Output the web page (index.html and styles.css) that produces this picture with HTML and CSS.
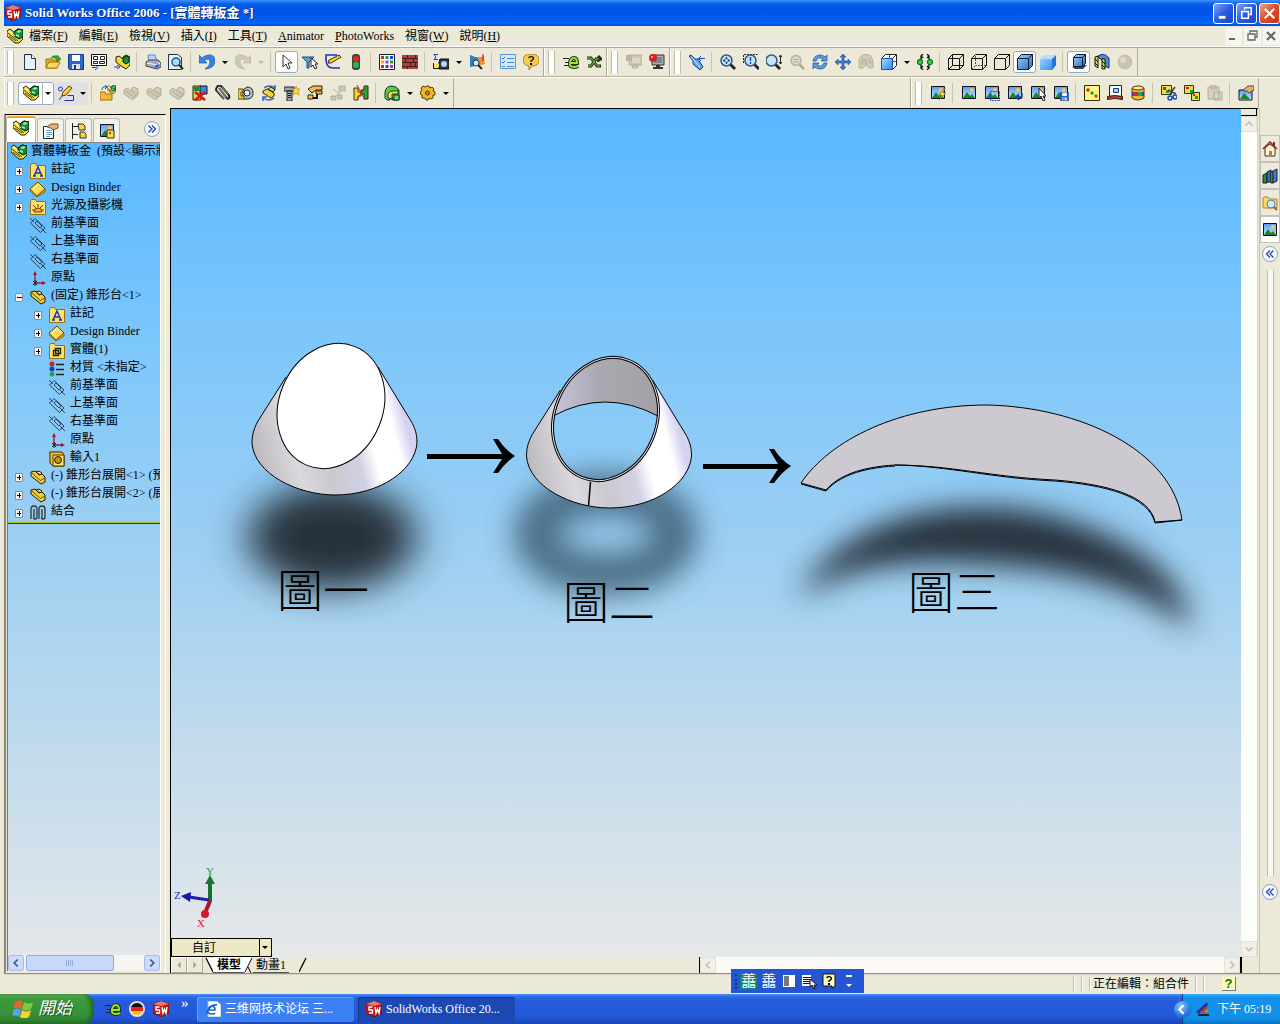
FILE: index.html
```html
<!DOCTYPE html>
<html lang="zh-Hant">
<head>
<meta charset="utf-8">
<title>SolidWorks Office 2006 - [實體轉板金 *]</title>
<link rel="stylesheet" href="styles.css">
</head>
<body>
<svg class="sprite" aria-hidden="true">
  <defs>
    <linearGradient id="g-blue" x1="0" y1="0" x2="1" y2="1"><stop offset="0" stop-color="#9cd4ff"/><stop offset="1" stop-color="#2868b8"/></linearGradient>
    <linearGradient id="g-sky" x1="0" y1="0" x2="1" y2="1"><stop offset="0" stop-color="#a8dcff"/><stop offset="1" stop-color="#2c84ee"/></linearGradient>
    <linearGradient id="g-pic" x1="0" y1="0" x2="0" y2="1"><stop offset="0" stop-color="#5a9cf0"/><stop offset="1" stop-color="#c8e4ff"/></linearGradient>
  </defs>
  <symbol id="asm" viewBox="0 0 16 16"><path d="M0 3l3-2 5 4V3l3-2 5 1v9l-4 4H8L0 8z" fill="#f4e048" stroke="#221c00"/><path d="M7 4l4-3 5 1v7l-4 2-5-3z" fill="#18883c" stroke="#06240c"/><path d="M9 4l3-2 3 1-3 2zM9 6l3 1v2L9 8z" fill="#90f0a0"/><path d="M1 5l10 8M2 8l7 5" stroke="#5a4800"/><path d="M2 3l6 5" stroke="#fffcb8"/></symbol>
  <symbol id="asmy" viewBox="0 0 16 16"><path d="M1 3l4-1 4 4 3-1 3 3v5l-4 2L1 7z" fill="#f0d040" stroke="#221c00"/><path d="M2 4l9 8M11 11l4-2" stroke="#6a5000"/><path d="M6 3l3-1 3 2-2 2z" fill="#ffe860" stroke="#221c00"/></symbol>
  <symbol id="asmg" viewBox="0 0 16 16"><path d="M1 5l3-2 4 3V4l3-2 4 2v6l-4 4H8L1 9z" fill="#d2ccb4" stroke="#b5ae94"/><path d="M3 6l8 6 3-4M8 6l4 2" stroke="#aca58c" fill="none"/></symbol>
  <symbol id="new" viewBox="0 0 16 16"><path d="M2.500.5h7l4 4v11h-11z" fill="#e4f0fc" stroke="#26324a"/><path d="M9.500.5v4h4" fill="#fff" stroke="#26324a"/></symbol>
  <symbol id="open" viewBox="0 0 16 16"><path d="M1 5h5l1 1h5v8H1z" fill="#e8a820" stroke="#a87000"/><path d="M1 14l3-6h11l-3 6z" fill="#ffdc60" stroke="#a87000"/><path d="M6 4q3-4 6-1V1l4 4-4 3V5Q9 3 6 4" fill="#28b428" stroke="#0a6a0a" stroke-width=".6"/></symbol>
  <symbol id="save" viewBox="0 0 16 16"><path d="M.5.5h15v15h-14l-1-1z" fill="#2e66c8" stroke="#123a86"/><path d="M4 1h8v6H4z" fill="#fff"/><path d="M4 10h8v5H4z" fill="#d8e4f4"/><path d="M6 11h2v4H6z" fill="#123a86"/></symbol>
  <symbol id="dwg" viewBox="0 0 16 16"><path d="M.5.500h15v11H.5z" fill="#fff" stroke="#111"/><path d="M2.500 2.500h4v3h-4zM2.500 7.500h4v2h-4zM9.500 2.500h4v3h-4zM8.500 7.500h5v2h-5z" fill="none" stroke="#222"/><path d="M1 13.500h4M4 11l3 2.500L4 16" fill="none" stroke="#1848c8"/></symbol>
  <symbol id="mkasm" viewBox="0 0 16 16"><path d="M2 3l3-1 4 3V3l3-2 4 2v8l-4 4-5-3-5-4z" fill="#f0d840" stroke="#221c00"/><path d="M9 4l3-2 3 1v5l-3 2-3-2z" fill="#18883c" stroke="#06240c"/><path d="M0 13h4M3 11l3 2-3 2" fill="none" stroke="#1848c8"/></symbol>
  <symbol id="print" viewBox="0 0 16 16"><path d="M3 1h7l2 7H4z" fill="#b4d4ff" stroke="#6888b0"/><path d="M1 8l3-2h9l3 3v4l-4 2-11-3z" fill="#a8acb8" stroke="#3c4250"/><path d="M2 9l10 2 3-2" stroke="#f0f4ff" fill="none"/><path d="M10 13l4-2" stroke="#2460c8" stroke-width="2"/></symbol>
  <symbol id="preview" viewBox="0 0 16 16"><path d="M.5.500h9l4 3v12H.5z" fill="#e4f0fc" stroke="#26324a"/><circle cx="8" cy="8" r="4" fill="#a8dcf8" stroke="#24507c" stroke-width="1.500"/><path d="M11 11l4 4" stroke="#222" stroke-width="2"/></symbol>
  <symbol id="undo" viewBox="0 0 16 16"><path d="M0 1v8h8L5.500 6.500Q11 3 11 8q0 4-5 7 10-1 10-8 0-7-7-6-4 1-6 3z" fill="#3484e0" stroke="#1c549c" stroke-width=".7"/></symbol>
  <symbol id="redo" viewBox="0 0 16 16"><path d="M16 1v8H8l2.500-2.500Q5 3 5 8q0 4 5 7-10-1-10-8 0-7 7-6 4 1 6 3z" fill="#cfc9b4" stroke="#bcb59c" stroke-width=".7"/></symbol>
  <symbol id="cursor" viewBox="0 0 16 16"><path d="M4 1v12l3-3 2 5 2-1-2-5h4z" fill="#fff" stroke="#333"/></symbol>
  <symbol id="filter" viewBox="0 0 16 16"><path d="M0 3h12L7 8v6H5V8z" fill="#58a0dc" stroke="#1c4874"/><path d="M9 4v9l2-2 2 4 2-1-2-4h3z" fill="#fff" stroke="#222"/></symbol>
  <symbol id="sketch" viewBox="0 0 16 16"><path d="M12 1H1v4q0 9 7 9h7" fill="none" stroke="#2030c0" stroke-width="1.600"/><path d="M3 9l1-3 10-5 2 2-10 6z" fill="#f8c848" stroke="#442a00"/></symbol>
  <symbol id="traffic" viewBox="0 0 16 16"><rect x="4" y="0" width="8" height="16" rx="3" fill="#444"/><circle cx="8" cy="5" r="3" fill="#e02818"/><circle cx="8" cy="11" r="3" fill="#20b848"/></symbol>
  <symbol id="palette" viewBox="0 0 16 16"><path d="M.5.500h15v15H.5z" fill="#fff" stroke="#123"/><path d="M2 2h3v3H2zM2 11h3v3H2z" fill="#d82020"/><path d="M6.500 2h3v3h-3zM11 6.500h3v3h-3z" fill="#18a040"/><path d="M11 2h3v3h-3zM6.500 11h3v3h-3z" fill="#2040d8"/><path d="M2 6.500h3v3H2z" fill="#f0b000"/><path d="M6.500 6.500h3v3h-3zM11 11h3v3h-3z" fill="#c030c0"/></symbol>
  <symbol id="brick" viewBox="0 0 16 16"><path d="M0 1h16v14H0z" fill="#a84436"/><path d="M0 4.500h16M0 8.500h16M0 12.500h16M5.500 1v3M11.500 4v4M3.500 4v4M8.500 8v4M13.500 8v4M5.500 12v3M13.500 1v3" stroke="#4a1a14"/></symbol>
  <symbol id="measure" viewBox="0 0 16 16"><path d="M5 .5H1L3 3 1 5.500h4" fill="none" stroke="#2038c0"/><path d="M7 5h9v10H6V8z" fill="#283848" stroke="#111"/><circle cx="11" cy="10" r="3" fill="#b8d8f0"/><path d="M.5 9v5.500H6" fill="none" stroke="#111"/><path d="M1 10h5v3H1z" fill="#f8e060"/></symbol>
  <symbol id="section" viewBox="0 0 16 16"><path d="M1 1q8 4 14 1v8L1 13z" fill="#50b860"/><path d="M1 1q6 3 8 3l1 7-9 2z" fill="#3878c8"/><path d="M9 4q4 0 5-2l2 8-5 1z" fill="#f09030"/><circle cx="7" cy="9" r="3" fill="#d0ecff" stroke="#234"/><path d="M9 11l4 4" stroke="#222" stroke-width="2"/><path d="M14 0v7" stroke="#d00"/></symbol>
  <symbol id="list" viewBox="0 0 16 16"><path d="M.5.500h15v14H.5z" fill="#d6e8fc" stroke="#5c94d8"/><path d="M2 4l1 1 2-2M2 8l1 1 2-2" stroke="#2468c0" fill="none"/><path d="M7 4.500h7M7 8.500h7M7 12.500h7M2 12.500h3" stroke="#4888d0"/></symbol>
  <symbol id="help" viewBox="0 0 16 16"><path d="M8 0q8 0 8 6t-7 6l-3 4v-4Q0 11 0 6q0-6 8-6z" fill="#f8cc50" stroke="#986800" stroke-width=".8"/><path d="M5.500 4q3-3 5 0 0 2-2.500 3v1" stroke="#222" stroke-width="1.500" fill="none"/><path d="M7 9h2v2H7z"/></symbol>
  <symbol id="eicon" viewBox="0 0 16 16"><path d="M0 4.500h6M2 8.500h4M1 11.500h5" stroke="#222"/><path d="M7 9h7q0-5-3-5T7 8.500 11 13q2 0 4-1" fill="none" stroke="#1c3410" stroke-width="4"/><path d="M7 9h7q0-5-3-5T7 8.500 11 13q2 0 4-1" fill="none" stroke="#a0e030" stroke-width="2"/></symbol>
  <symbol id="link" viewBox="0 0 16 16"><path d="M1 4h4l6 8h4M2 12h3l5-7h4M12 2l3 3-4 2" fill="none" stroke="#1c3010" stroke-width="2.800"/><path d="M1 4h4l6 8h3M2 12h3l5-7h3" fill="none" stroke="#88c860"/></symbol>
  <symbol id="pcg" viewBox="0 0 16 16"><path d="M3 1h13v10H3zM7 11h5v3H6z" fill="#cdc7b0" stroke="#b8b198"/><path d="M0 1h6v6H0z" fill="#bcb59c"/><path d="M6 4h8v5H6z" fill="#ddd8c4"/></symbol>
  <symbol id="pcr" viewBox="0 0 16 16"><path d="M3 1h12v10H3z" fill="#a8acb4" stroke="#333"/><path d="M5 3h8v6H5z" fill="#80868f"/><path d="M7 11h4v2h3v2H4v-2h3z" fill="#333"/><circle cx="4" cy="4" r="4" fill="#d82020"/><circle cx="3" cy="3" r="1" fill="#fba"/></symbol>
  <symbol id="bottle" viewBox="0 0 16 16"><path d="M0 2l2-1 4 4 3 0 5 8-3 3-7-6 0-3z" fill="#5ca4ec" stroke="#14407c"/><path d="M2 3l9 10" stroke="#d8f0ff"/><path d="M16 4.500h-6M12 2l-2.500 2.500L12 7" stroke="#1c48b8" fill="none"/></symbol>
  <symbol id="zoom" viewBox="0 0 16 16"><path d="M10 10l5 5" stroke="#222" stroke-width="2.800"/><circle cx="6.500" cy="6.500" r="5.500" fill="#c4e6fc" stroke="#3c5878" stroke-width="1.500"/></symbol>
  <symbol id="zfit" viewBox="0 0 16 16"><use href="#zoom"/><path d="M6.500 3v7M3 6.500h7" stroke="#1c3c8c" stroke-width="1.300"/><path d="M5 5h3v3H5z" fill="#fff" stroke="#1c3c8c" stroke-width=".6"/></symbol>
  <symbol id="zarea" viewBox="0 0 16 16"><path d="M.5 9V.500h14" fill="none" stroke="#222" stroke-dasharray="2 1"/><use href="#zoom" x="1"/><path d="M7.500 3v4M7.500 8v2" stroke="#1c4cac" stroke-width="1.500"/></symbol>
  <symbol id="zio" viewBox="0 0 16 16"><use href="#zoom" x="-1"/><path d="M14.500 1v9M13 3l1.500-2L16 3M13 8l1.500 2L16 8" stroke="#222" fill="none"/></symbol>
  <symbol id="zgrey" viewBox="0 0 16 16"><path d="M10 10l5 5" stroke="#b4ad94" stroke-width="2.500"/><circle cx="7" cy="6.500" r="5" fill="#dcd7c4" stroke="#bab39b" stroke-width="1.500"/><path d="M4 5.500h6M4 8h6" stroke="#bab39b"/></symbol>
  <symbol id="rotate" viewBox="0 0 16 16"><path d="M1 7q1-6 7-6 3 0 5 2l2-2v6H9l2-2Q6 2 4 7zM15 9q-1 6-7 6-3 0-5-2l-2 2V9h6l-2 2q5 3 7-2z" fill="#5c9ce4" stroke="#1c4c90" stroke-width=".7"/></symbol>
  <symbol id="pan" viewBox="0 0 16 16"><path d="M8 0l3 3H9v4h4V5l3 3-3 3V9H9v4h2l-3 3-3-3h2V9H3v2L0 8l3-3v2h4V3H5z" fill="#3878d0" stroke="#1c4c90" stroke-width=".6"/></symbol>
  <symbol id="blobg" viewBox="0 0 16 16"><path d="M1 5q4-6 10-4 5 2 4 13h-4l-3-3-3 3H1z" fill="#d2ccb6" stroke="#b8b198"/><path d="M4 11V6h4v5M10 5q3 0 2 5" fill="none" stroke="#aca58c"/></symbol>
  <symbol id="cubev" viewBox="0 0 16 16"><path d="M.5 4.500l4-4h11v11l-4 4" fill="#fff" stroke="#222"/><path d="M11 5l4-4" stroke="#222"/><path d="M.5 4.500h11v11H.5z" fill="url(#g-sky)" stroke="#1454b4"/><path d="M8.500 1v3M12 7.500h3" stroke="#c03060"/></symbol>
  <symbol id="mirror" viewBox="0 0 16 16"><path d="M6 0L4 2l2 2M10 0l2 2-2 2M6 12l-2 2 2 2M10 12l2 2-2 2M4 2v12M12 2v12" fill="none" stroke="#111" stroke-width="1.300"/><circle cx="3" cy="8" r="2.700" fill="#34c834" stroke="#063"/><circle cx="13" cy="8" r="2.700" fill="#34c834" stroke="#063"/></symbol>
  <symbol id="wire" viewBox="0 0 16 16"><path d="M.5 4.500h11v11H.5zM4.500.500h11v11h-11zM.5 4.500l4-4M11.500 4.500l4-4M.5 15.500l4-4M11.500 15.500l4-4" fill="none" stroke="#111"/></symbol>
  <symbol id="hidden" viewBox="0 0 16 16"><path d="M.5 4.500h11v11H.5zM.5 4.500l4-4h11v11l-4 4M11.500 4.500l4-4" fill="none" stroke="#111"/><path d="M4.500 2v9.500H15M.5 15.500l4-4" fill="none" stroke="#555" stroke-dasharray="2 1"/></symbol>
  <symbol id="removed" viewBox="0 0 16 16"><path d="M.5 4.500h11v11H.5zM.5 4.500l4-4h11v11l-4 4M11.500 4.500l4-4" fill="none" stroke="#111"/></symbol>
  <symbol id="shedge" viewBox="0 0 16 16"><path d="M.5 4.500l4-4h11v11l-4 4H.5z" fill="url(#g-blue)" stroke="#0c1c34"/><path d="M.5 4.500h11v11M11.500 4.500l4-4" fill="none" stroke="#0c1c34"/></symbol>
  <symbol id="shaded" viewBox="0 0 16 16"><path d="M0 5l4-4h12v10l-4 5H0z" fill="url(#g-sky)"/><path d="M12 5l4-4v10l-4 5z" fill="#2474d8"/><path d="M0 5l4-4h12l-4 4z" fill="#b4e0ff"/></symbol>
  <symbol id="shadow" viewBox="0 0 16 16"><path d="M1 13l6-2h9l-4 4H4z" fill="#444"/><path d="M2.500 3.500l3-3h9v9l-3 3h-9z" fill="url(#g-blue)" stroke="#0c1c34"/><path d="M2.500 3.500h9v9M11.500 3.500l3-3" fill="none" stroke="#0c1c34"/></symbol>
  <symbol id="persp" viewBox="0 0 16 16"><path d="M4 2q6-4 11 2v10l-4-2V7Q9 4 6 5z" fill="#4890e0" stroke="#112a60"/><path d="M1 3l3-1v12l-3-2zM8 5h3v10H8z" fill="#f0e020" stroke="#111"/><path d="M1 5l3 3M1 9l3 3M8 7l3 3M8 11l3 3" stroke="#111"/></symbol>
  <symbol id="sphere" viewBox="0 0 16 16"><circle cx="8" cy="8" r="7.500" fill="#c9c3ac"/><circle cx="6" cy="6" r="3" fill="#dfdac8"/></symbol>
  <symbol id="sketchy" viewBox="0 0 16 16"><circle cx="2.500" cy="4" r="2" fill="none" stroke="#2030c0"/><path d="M1 15L7 7M9.500 10.500h6v5h-9" fill="none" stroke="#2030c0"/><path d="M4 11l1-4 6-6 3 2-6 7z" fill="#f8c848" stroke="#6a4000"/></symbol>
  <symbol id="insert" viewBox="0 0 16 16"><path d="M0 7h5l1 2h6v6H0z" fill="#f4b838" stroke="#a87000"/><path d="M2 5q0-4 4-3M5 0l2 2-2 2" fill="none" stroke="#2048b8"/><use href="#asm" x="7" width="9" height="9"/></symbol>
  <symbol id="hide" viewBox="0 0 16 16"><path d="M1 1h8v14H1z" fill="#f0d840" stroke="#221c00"/><path d="M8 1h7v8H8z" fill="#3888e8" stroke="#112"/><path d="M2 2h5v4H2z" fill="#18883c"/><path d="M3 7l10 8M13 7L3 15" stroke="#d81818" stroke-width="2.800"/></symbol>
  <symbol id="clip" viewBox="0 0 16 16"><path d="M4 3l7 9q2 3 3 1t-1-4L7 2Q4-1 2 2t0 4l7 8" fill="none" stroke="#222" stroke-width="2"/><path d="M4 3l7 9M2 5l7 9M7 2l6 7" stroke="#bbb" stroke-width=".8"/></symbol>
  <symbol id="mate" viewBox="0 0 16 16"><path d="M5 5l4-3q6 0 6 6t-6 6H5z" fill="#b8c0c8" stroke="#222"/><circle cx="9" cy="8" r="3" fill="#f4f4f4" stroke="#222"/><path d="M0 4h5v3H3v4h3v3H0z" fill="#f8d020" stroke="#443"/></symbol>
  <symbol id="rotc" viewBox="0 0 16 16"><path d="M3 3q5-4 11 0M14 0v4h-4M13 13q-5 4-11 0M2 16v-4h4" fill="none" stroke="#2468c8" stroke-width="1.500"/><path d="M2 6l4-2 7 4v3l-3 2-8-5zM7 4l3-2 4 3-2 2z" fill="#f0d840" stroke="#332800"/></symbol>
  <symbol id="bolt" viewBox="0 0 16 16"><path d="M0 2h10v4H0zM3 6h5v10H3z" fill="#a0a4a8" stroke="#222"/><path d="M4 8.500h3M4 10.500h3M4 12.500h3" stroke="#222"/><path d="M12 1l1 3 3 0-2 2 1 4-3-2-3 2 1-4-2-2h3z" fill="#ffe030" stroke="#b07800" stroke-width=".6"/></symbol>
  <symbol id="expl" viewBox="0 0 16 16"><path d="M1 4l5-3h9v4H9L5 8zM9 6h6v3H9zM1 10h5v4H1z" fill="#f4bc50" stroke="#332000"/><path d="M6 13h4V9" fill="none" stroke="#111" stroke-width="2"/></symbol>
  <symbol id="explg" viewBox="0 0 16 16"><path d="M9 1h6v5H9zM1 11h5v4H1zM8 10h4v4H8z" fill="#cec8b0" stroke="#b5ae94"/><path d="M3 4l8 6M11 6l-6 6" stroke="#b5ae94"/></symbol>
  <symbol id="interf" viewBox="0 0 16 16"><path d="M1 3h4v4h3v4H5v4H1z" fill="#f4d820" stroke="#332"/><path d="M15 1h-4v4H8v4h3v5h4z" fill="#28a838" stroke="#132"/><path d="M4 0l8 15M12 1L4 15" stroke="#e02020"/></symbol>
  <symbol id="pipe" viewBox="0 0 16 16"><path d="M1 13V7q1-6 7-6 4 0 7 4v10H8v-3H6v3H3z" fill="#58c850" stroke="#132"/><path d="M4 13V9q1-3 5-3h5v3H8v5z" fill="#f4e850" stroke="#332"/><path d="M10 10h5v5h-5z" fill="#78e070" stroke="#132"/></symbol>
  <symbol id="gear" viewBox="0 0 16 16"><path d="M7 1h2l1 2 2-1 2 2-1 2 2 1v3l-2 0 0 3-2 1-2-1-1 2H6l-1-2-3 0 0-3-2-1 1-3 1-1-1-2 2-2 2 1z" fill="#f0b828" stroke="#543c00"/><circle cx="7.500" cy="8" r="2" fill="#c88c10" stroke="#543c00"/></symbol>
  <symbol id="pic" viewBox="0 0 16 16"><path d="M1.500 1.500h13v12h-13z" fill="url(#g-pic)" stroke="#112"/><path d="M2 13l4-6 3 4 2-2 3 4z" fill="#188828"/><circle cx="11" cy="5" r="2" fill="#f8c840"/></symbol>
  <symbol id="picr" viewBox="0 0 16 16"><use href="#pic"/><path d="M15 3l-6 7h3l-3 5 7-7h-3z" fill="#ffe830" stroke="#664" stroke-width=".7"/></symbol>
  <symbol id="pica" viewBox="0 0 16 16"><use href="#pic"/><path d="M6.500 6.500h9v9h-9z" fill="none" stroke="#1848c8" stroke-dasharray="2 1"/></symbol>
  <symbol id="picl" viewBox="0 0 16 16"><use href="#pic"/><path d="M15 8v4H9M12 9l-3 3 3 3" fill="none" stroke="#1848a8" stroke-width="1.500"/></symbol>
  <symbol id="picc" viewBox="0 0 16 16"><use href="#pic"/><path d="M9 3v10l2-2 2 5 2-1-2-4h3z" fill="#fff" stroke="#222"/></symbol>
  <symbol id="pics" viewBox="0 0 16 16"><use href="#pic"/><use href="#save" x="7" y="7" width="9" height="9"/></symbol>
  <symbol id="dots" viewBox="0 0 16 16"><path d="M.5.500h15v15H.5z" fill="#fff480" stroke="#332800"/><circle cx="4" cy="5" r="1.700" fill="#d02020"/><circle cx="8" cy="8" r="1.700" fill="#18a040"/><circle cx="12" cy="11" r="1.700" fill="#a06010"/></symbol>
  <symbol id="book" viewBox="0 0 16 16"><path d="M2.500.500h12v12h-12z" fill="#f8f8f8" stroke="#222"/><path d="M6.500 3.500h5v4h-5z" fill="#a8ccf8" stroke="#146"/><path d="M.5 11.500q7-2 15 0v3q-8-2-15 0z" fill="#c03830" stroke="#411"/></symbol>
  <symbol id="can" viewBox="0 0 16 16"><path d="M2 3q6-3 12 0v10q-6 4-12 0z" fill="#f0b830" stroke="#543c00"/><path d="M2 7h12v4H2z" fill="#2848c0"/><path d="M4 7h4v4H4z" fill="#d82828"/><path d="M8 7h4v4H8z" fill="#28a848"/><ellipse cx="8" cy="3" rx="5.500" ry="2" fill="#ffe890" stroke="#543c00"/></symbol>
  <symbol id="cut" viewBox="0 0 16 16"><path d="M.5.500h10v9H.5z" fill="#f4e040" stroke="#332"/><path d="M2 2h3v3H2z" fill="#d02020"/><path d="M5 5h3v3H5z" fill="#18a040"/><path d="M9 9l5-7M15 9L7 5" stroke="#444" stroke-width="1.500"/><circle cx="9" cy="13" r="2" fill="none" stroke="#1848b8" stroke-width="1.500"/><circle cx="14" cy="12" r="2" fill="none" stroke="#1848b8" stroke-width="1.500"/></symbol>
  <symbol id="copy" viewBox="0 0 16 16"><path d="M.5.500h9v8h-9zM7.500 7.500h8v8h-8z" fill="#f4e040" stroke="#332"/><path d="M2 2h3v2H2zM9 9h2v2H9z" fill="#d02020"/><path d="M6 5h3v3H6zM11 11h3v3h-3z" fill="#18a040"/></symbol>
  <symbol id="paste" viewBox="0 0 16 16"><path d="M1 2h11v12H1zM4 0h5v4H4zM7 7h8v8H7z" fill="#d6d0bc" stroke="#b5ae94"/></symbol>
  <symbol id="pich" viewBox="0 0 16 16"><path d="M1 5h13v10H1z" fill="url(#g-pic)" stroke="#112"/><path d="M2 14l4-6 6 6z" fill="#188828"/><path d="M5 5l5-4h6v4l-5 3-2-2H6z" fill="#e8b070" stroke="#543"/></symbol>
  <symbol id="prop" viewBox="0 0 16 16"><path d="M.5 3.500h10v12H.5z" fill="#fff" stroke="#222"/><path d="M3 7.500h6M3 9.500h6M3 11.500h6M3 13.500h4" stroke="#68a0d8"/><path d="M4 4l4-3h7v4l-5 2-2-2z" fill="#e8b070" stroke="#654"/></symbol>
  <symbol id="conf" viewBox="0 0 16 16"><path d="M1.500 0v16M2 3.500h5M2 11.500h5" stroke="#222" fill="none"/><path d="M7 1h5l2 2v4H8zM9 9h4l2 2v4H9z" fill="#f8d840" stroke="#332"/></symbol>
  <symbol id="picp" viewBox="0 0 16 16"><use href="#pic"/><path d="M8 7h7v8H8z" fill="#f4e040" stroke="#332"/><path d="M10 9h2v2h-2z" fill="#d22"/></symbol>
  <symbol id="fold" viewBox="0 0 16 16"><path d="M.5 2.500l1-2h4l1 2h9v13H.5z" fill="#fce070" stroke="#98700c"/></symbol>
  <symbol id="note" viewBox="0 0 16 16"><use href="#fold"/><path d="M4 13l4-9 4 9M6 10h4M3 13h3M10 13h3" fill="none" stroke="#1830a0" stroke-width="1.400"/></symbol>
  <symbol id="light" viewBox="0 0 16 16"><use href="#fold"/><path d="M4 13q0-4 4-4t4 4zM8 5v3M3 6l3 3M13 6l-3 3M2 11h3M14 11h-3" fill="#f8b020" stroke="#7c3c00"/></symbol>
  <symbol id="body" viewBox="0 0 16 16"><use href="#fold"/><path d="M4.500 7.500h5v5h-5zM6.500 5.500h5v5h-5z" fill="none" stroke="#221c00" stroke-width="1.300"/></symbol>
  <symbol id="binder" viewBox="0 0 16 16"><path d="M0 8l8-7 7 7-8 7z" fill="#ffe058" stroke="#664400"/><path d="M7 15l8-7v3l-8 5-7-6V8z" fill="#e8a820" stroke="#664400" stroke-width=".7"/><path d="M3 8l5-5" stroke="#fffbd0"/></symbol>
  <symbol id="plane" viewBox="0 0 16 16"><path d="M.5 6L5 1.500 15 11l-4.500 4.500zM5 6l2-2 5 5-2 2zM0 1l4 4M11 11l5 5" fill="none" stroke="#26324a" stroke-width=".9"/></symbol>
  <symbol id="origin" viewBox="0 0 16 16"><path d="M5 2v10h9" fill="none" stroke="#a01828" stroke-width="1.300"/><path d="M3 4l2-4 2 4zM12 10l4 2-4 2z" fill="#a01828"/><path d="M3 10l4 4M7 10l-4 4M5 9v6" stroke="#222"/></symbol>
  <symbol id="mat" viewBox="0 0 16 16"><circle cx="3" cy="3" r="2.500" fill="#d02020"/><circle cx="3" cy="8" r="2.500" fill="#2038d0"/><circle cx="3" cy="13" r="2.500" fill="#18a848"/><path d="M7 3.500h8M7 8.500h8M7 13.500h8" stroke="#222" stroke-width="1.500"/></symbol>
  <symbol id="import" viewBox="0 0 16 16"><path d="M1 1h12l2 3v11H4l-3-3z" fill="#f8c820" stroke="#332000"/><path d="M4 4h11v11H4z" fill="#ffe070" stroke="#553800"/><circle cx="9" cy="9" r="3.500" fill="#c89010" stroke="#332000"/></symbol>
  <symbol id="mates" viewBox="0 0 16 16"><path d="M1 14V4q0-3 3-3t3 3v8q0 2-2 2t-1-2V4M9 14V4q0-3 3-3t3 3v8q0 2-2 2t-1-2V4" fill="none" stroke="#333" stroke-width="1.300"/></symbol>
  <symbol id="home" viewBox="0 0 16 16"><path d="M3 7v8h10V7L8 3z" fill="#fff8d8" stroke="#332"/><path d="M1 8l7-7 7 7" fill="none" stroke="#a82818" stroke-width="1.600"/><path d="M7 10h3v5H7z" fill="#d87030"/><path d="M12 1v4" stroke="#732" stroke-width="2"/></symbol>
  <symbol id="books" viewBox="0 0 16 16"><path d="M1 7l4-2v10H1z" fill="#308848" stroke="#122"/><path d="M5 4l4-2v12H5z" fill="#3c68c8" stroke="#122"/><path d="M9 4l2-1v12H9z" fill="#f0d020" stroke="#122"/><path d="M11 3l4-2v12l-4 2z" fill="#3c80d8" stroke="#122"/></symbol>
  <symbol id="find" viewBox="0 0 16 16"><path d="M1 3l1-1h4l1 2h8v9H1z" fill="#fcd468" stroke="#b8801c"/><circle cx="9" cy="9" r="4" fill="#cceaff" stroke="#5080b0"/><path d="M12 12l3 3" stroke="#a06020" stroke-width="2"/></symbol>
  <symbol id="sw" viewBox="0 0 16 16"><path d="M0 3l8-3 8 3v9l-8 4-8-4z" fill="#b81818" stroke="#600" stroke-width=".6"/><path d="M0 3l8-3 8 3-8 2z" fill="#e87868"/><path d="M6.500 6H3v3h3.500v3H3M9 6l1 6 1.500-4L13 12l1-6" fill="none" stroke="#fff" stroke-width="1.400"/></symbol>
  <symbol id="win" viewBox="0 0 20 18"><path d="M2 2q4-3 8 0L8 9Q4 6 0 9z" fill="#f06030"/><path d="M11 2q4 3 9 0l-2 7q-5 3-9 0z" fill="#80c840"/><path d="M0 10q4-3 8 0l-2 7q-3-3-7 0z" fill="#58a0f8"/><path d="M9 10q4 3 9 0l-2 7q-5 3-9 0z" fill="#fcd030"/></symbol>
  <symbol id="ie" viewBox="0 0 16 16"><path d="M3 0h9l4 4v12H3z" fill="#fff" stroke="#a8b8c8"/><path d="M3 9h7q0-4-3-4T3 9t4 4q2 0 3-1M1 13q4-10 11-9" fill="none" stroke="#1868d0" stroke-width="1.700"/></symbol>
  <symbol id="flag" viewBox="0 0 16 16"><circle cx="8" cy="8" r="8" fill="#e8e0e0"/><path d="M2 6q2-4 6-4t6 4z" fill="#181010"/><path d="M2 6h12v4H2z" fill="#e02818"/><path d="M2 10h12q-2 4-6 4t-6-4z" fill="#f8c020"/></symbol>
  <symbol id="tray" viewBox="0 0 16 16"><path d="M1 11L12 1l1 3-9 9z" fill="#1838a0"/><path d="M5 11l8-7v4l-4 4z" fill="#e03020"/><path d="M9 11l4-4v4z" fill="#40c840"/><path d="M3 13h11v2H3z" fill="#222"/></symbol>
</svg>

<div class="app">
  <header class="title-bar">
    <svg class="ic"><use href="#sw"/></svg>
    <h1>Solid Works Office 2006 - [實體轉板金 *]</h1>
    <div class="win-buttons">
      <button class="wb" aria-label="最小化"><svg viewBox="0 0 20 20"><path d="M5 14h7" stroke="#fff" stroke-width="3"/></svg></button>
      <button class="wb" aria-label="還原"><svg viewBox="0 0 20 20"><path d="M8 6V4h7v7h-2M5 8h7v7H5z" fill="none" stroke="#fff" stroke-width="1.600"/></svg></button>
      <button class="wb close" aria-label="關閉"><svg viewBox="0 0 20 20"><path d="M5 5l10 10M15 5L5 15" stroke="#fff" stroke-width="2.400"/></svg></button>
    </div>
  </header>

  <nav class="menu-bar">
    <svg class="ic"><use href="#asm"/></svg>
    <button>檔案(<u>F</u>)</button><button>編輯(<u>E</u>)</button><button>檢視(<u>V</u>)</button><button>插入(<u>I</u>)</button><button>工具(<u>T</u>)</button><button><u>A</u>nimator</button><button><u>P</u>hotoWorks</button><button>視窗(<u>W</u>)</button><button>說明(<u>H</u>)</button>
    <div class="doc-buttons">
      <button aria-label="最小化文件"><svg viewBox="0 0 16 16"><path d="M4 11h6" stroke="#666" stroke-width="2"/></svg></button>
      <button aria-label="還原文件"><svg viewBox="0 0 16 16"><path d="M6 5V3h7v6h-2M4 6h7v6H4z" fill="none" stroke="#666" stroke-width="1.300"/></svg></button>
      <button aria-label="關閉文件"><svg viewBox="0 0 16 16"><path d="M4 4l8 8M12 4l-8 8" stroke="#666" stroke-width="2.200"/></svg></button>
    </div>
  </nav>

  <div class="tool-row">
    <div class="group" role="toolbar" aria-label="標準">
      <button aria-label="開新檔案"><svg class="ic"><use href="#new"/></svg></button>
      <button aria-label="開啟舊檔"><svg class="ic"><use href="#open"/></svg></button>
      <button aria-label="儲存"><svg class="ic"><use href="#save"/></svg></button>
      <button aria-label="產生工程圖"><svg class="ic"><use href="#dwg"/></svg></button>
      <button aria-label="產生組合件"><svg class="ic"><use href="#mkasm"/></svg></button><i class="sep"></i>
      <button aria-label="列印"><svg class="ic"><use href="#print"/></svg></button>
      <button aria-label="預覽列印"><svg class="ic"><use href="#preview"/></svg></button><i class="sep"></i>
      <button aria-label="復原"><svg class="ic"><use href="#undo"/></svg></button><button class="drop" aria-label="復原清單"></button>
      <button aria-label="取消復原"><svg class="ic"><use href="#redo"/></svg></button><button class="drop off" aria-label="取消復原清單"></button><i class="sep"></i>
      <button class="on" aria-label="選擇"><svg class="ic"><use href="#cursor"/></svg></button>
      <button aria-label="選擇過濾器"><svg class="ic"><use href="#filter"/></svg></button>
      <button aria-label="草圖"><svg class="ic"><use href="#sketch"/></svg></button>
      <button aria-label="重新計算"><svg class="ic"><use href="#traffic"/></svg></button><i class="sep"></i>
      <button aria-label="色彩"><svg class="ic"><use href="#palette"/></svg></button>
      <button aria-label="材質"><svg class="ic"><use href="#brick"/></svg></button><i class="sep"></i>
      <button aria-label="量測"><svg class="ic"><use href="#measure"/></svg></button><button class="drop" aria-label="量測清單"></button>
      <button aria-label="分析"><svg class="ic"><use href="#section"/></svg></button><i class="sep"></i>
      <button aria-label="選項"><svg class="ic"><use href="#list"/></svg></button>
      <button aria-label="說明"><svg class="ic"><use href="#help"/></svg></button>
    </div>
    <div class="group" role="toolbar" aria-label="eDrawings">
      <button aria-label="發佈"><svg class="ic"><use href="#eicon"/></svg></button>
      <button aria-label="連結"><svg class="ic"><use href="#link"/></svg></button>
    </div>
    <div class="group" role="toolbar" aria-label="錄影">
      <button aria-label="停止"><svg class="ic"><use href="#pcg"/></svg></button>
      <button aria-label="錄製"><svg class="ic"><use href="#pcr"/></svg></button>
    </div>
    <div class="group" role="toolbar" aria-label="檢視">
      <button aria-label="前一視角"><svg class="ic"><use href="#bottle"/></svg></button><i class="sep"></i>
      <button aria-label="最適當大小"><svg class="ic"><use href="#zfit"/></svg></button>
      <button aria-label="局部放大"><svg class="ic"><use href="#zarea"/></svg></button>
      <button aria-label="拉近拉遠"><svg class="ic"><use href="#zio"/></svg></button>
      <button aria-label="放大選取"><svg class="ic"><use href="#zgrey"/></svg></button>
      <button aria-label="旋轉"><svg class="ic"><use href="#rotate"/></svg></button>
      <button aria-label="移動"><svg class="ic"><use href="#pan"/></svg></button>
      <button aria-label="立體圖"><svg class="ic"><use href="#blobg"/></svg></button>
      <button aria-label="標準視角"><svg class="ic"><use href="#cubev"/></svg></button><button class="drop" aria-label="標準視角清單"></button>
      <button aria-label="對稱"><svg class="ic"><use href="#mirror"/></svg></button><i class="sep"></i>
      <button aria-label="線架構"><svg class="ic"><use href="#wire"/></svg></button>
      <button aria-label="顯示隱藏線"><svg class="ic"><use href="#hidden"/></svg></button>
      <button aria-label="移除隱藏線"><svg class="ic"><use href="#removed"/></svg></button>
      <button class="on" aria-label="帶邊線塗彩"><svg class="ic"><use href="#shedge"/></svg></button>
      <button aria-label="塗彩"><svg class="ic"><use href="#shaded"/></svg></button><i class="sep"></i>
      <button class="on" aria-label="陰影"><svg class="ic"><use href="#shadow"/></svg></button>
      <button aria-label="剖面視角"><svg class="ic"><use href="#persp"/></svg></button>
      <button aria-label="即時檢視"><svg class="ic"><use href="#sphere"/></svg></button>
    </div>
  </div>

  <div class="tool-row second">
    <div class="group" role="toolbar" aria-label="組合件">
      <span class="split on"><button aria-label="組合件"><svg class="ic"><use href="#asm"/></svg></button><button class="drop" aria-label="組合件清單"></button></span>
      <span class="split tint"><button aria-label="草圖工具"><svg class="ic"><use href="#sketchy"/></svg></button><button class="drop" aria-label="草圖清單"></button></span><i class="sep"></i>
      <button aria-label="插入零組件"><svg class="ic"><use href="#insert"/></svg></button>
      <button aria-label="隱藏零組件"><svg class="ic"><use href="#asmg"/></svg></button>
      <button aria-label="抑制狀態"><svg class="ic"><use href="#asmg"/></svg></button>
      <button aria-label="編輯零組件"><svg class="ic"><use href="#asmg"/></svg></button>
      <button aria-label="無外部參考"><svg class="ic"><use href="#hide"/></svg></button>
      <button aria-label="結合"><svg class="ic"><use href="#clip"/></svg></button>
      <button aria-label="移動零組件"><svg class="ic"><use href="#mate"/></svg></button>
      <button aria-label="旋轉零組件"><svg class="ic"><use href="#rotc"/></svg></button>
      <button aria-label="智慧型扣件"><svg class="ic"><use href="#bolt"/></svg></button>
      <button aria-label="爆炸視圖"><svg class="ic"><use href="#expl"/></svg></button>
      <button aria-label="爆炸線"><svg class="ic"><use href="#explg"/></svg></button>
      <button aria-label="干涉檢查"><svg class="ic"><use href="#interf"/></svg></button><i class="sep"></i>
      <button aria-label="特徵"><svg class="ic"><use href="#pipe"/></svg></button><button class="drop" aria-label="特徵清單"></button>
      <button aria-label="模擬"><svg class="ic"><use href="#gear"/></svg></button><button class="drop" aria-label="模擬清單"></button>
    </div>
    <div class="group right" role="toolbar" aria-label="PhotoWorks">
      <button aria-label="彩現精靈"><svg class="ic"><use href="#picr"/></svg></button><i class="sep"></i>
      <button aria-label="彩現"><svg class="ic"><use href="#pic"/></svg></button>
      <button aria-label="彩現區域"><svg class="ic"><use href="#pica"/></svg></button>
      <button aria-label="彩現前次"><svg class="ic"><use href="#picl"/></svg></button>
      <button aria-label="彩現選取"><svg class="ic"><use href="#picc"/></svg></button>
      <button aria-label="彩現至檔案"><svg class="ic"><use href="#pics"/></svg></button><i class="sep"></i>
      <button aria-label="材料"><svg class="ic"><use href="#dots"/></svg></button>
      <button aria-label="全景"><svg class="ic"><use href="#book"/></svg></button>
      <button aria-label="移畫印花"><svg class="ic"><use href="#can"/></svg></button><i class="sep"></i>
      <button aria-label="剪下材料"><svg class="ic"><use href="#cut"/></svg></button>
      <button aria-label="複製材料"><svg class="ic"><use href="#copy"/></svg></button>
      <button aria-label="貼上材料"><svg class="ic"><use href="#paste"/></svg></button><i class="sep"></i>
      <button aria-label="PhotoWorks 選項"><svg class="ic"><use href="#pich"/></svg></button>
    </div>
  </div>

  <main class="workspace">
    <aside class="feature-panel">
      <div class="panel-tabs">
        <button class="current" aria-label="特徵管理員"><svg class="ic"><use href="#asm"/></svg></button>
        <button aria-label="屬性管理員"><svg class="ic"><use href="#prop"/></svg></button>
        <button aria-label="模型組態"><svg class="ic"><use href="#conf"/></svg></button>
        <button aria-label="PhotoWorks"><svg class="ic"><use href="#picp"/></svg></button>
        <button class="round" aria-label="展開"><svg viewBox="0 0 16 16"><path d="M4 4l4 4-4 4M8 4l4 4-4 4" fill="none" stroke="#244a9c" stroke-width="1.500"/></svg></button>
      </div>
      <div class="tree-area">
        <ul class="tree">
          <li class="root"><svg class="ic"><use href="#asm"/></svg>實體轉板金&nbsp; (預設&lt;顯示狀</li>
          <li><button class="exp plus" aria-label="展開"></button><svg class="ic"><use href="#note"/></svg>註記</li>
          <li><button class="exp plus" aria-label="展開"></button><svg class="ic"><use href="#binder"/></svg>Design Binder</li>
          <li><button class="exp plus" aria-label="展開"></button><svg class="ic"><use href="#light"/></svg>光源及攝影機</li>
          <li><i class="exp none"></i><svg class="ic"><use href="#plane"/></svg>前基準面</li>
          <li><i class="exp none"></i><svg class="ic"><use href="#plane"/></svg>上基準面</li>
          <li><i class="exp none"></i><svg class="ic"><use href="#plane"/></svg>右基準面</li>
          <li><i class="exp none"></i><svg class="ic"><use href="#origin"/></svg>原點</li>
          <li><button class="exp" aria-label="收合"></button><svg class="ic"><use href="#asmy"/></svg>(固定) 錐形台&lt;1&gt;</li>
          <li class="sub"><button class="exp plus" aria-label="展開"></button><svg class="ic"><use href="#note"/></svg>註記</li>
          <li class="sub"><button class="exp plus" aria-label="展開"></button><svg class="ic"><use href="#binder"/></svg>Design Binder</li>
          <li class="sub"><button class="exp plus" aria-label="展開"></button><svg class="ic"><use href="#body"/></svg>實體(1)</li>
          <li class="sub"><i class="exp none"></i><svg class="ic"><use href="#mat"/></svg>材質 &lt;未指定&gt;</li>
          <li class="sub"><i class="exp none"></i><svg class="ic"><use href="#plane"/></svg>前基準面</li>
          <li class="sub"><i class="exp none"></i><svg class="ic"><use href="#plane"/></svg>上基準面</li>
          <li class="sub"><i class="exp none"></i><svg class="ic"><use href="#plane"/></svg>右基準面</li>
          <li class="sub"><i class="exp none"></i><svg class="ic"><use href="#origin"/></svg>原點</li>
          <li class="sub"><i class="exp none"></i><svg class="ic"><use href="#import"/></svg>輸入1</li>
          <li><button class="exp plus" aria-label="展開"></button><svg class="ic"><use href="#asmy"/></svg>(-) 錐形台展開&lt;1&gt; (預</li>
          <li><button class="exp plus" aria-label="展開"></button><svg class="ic"><use href="#asmy"/></svg>(-) 錐形台展開&lt;2&gt; (展</li>
          <li><button class="exp plus" aria-label="展開"></button><svg class="ic"><use href="#mates"/></svg>結合</li>
        </ul>
        <div class="hscroll">
          <button aria-label="向左捲動"><svg viewBox="0 0 16 16"><path d="M10 4L6 8l4 4" fill="none" stroke="#3c5890" stroke-width="2"/></svg></button>
          <span class="track"><span class="thumb"></span></span>
          <button aria-label="向右捲動"><svg viewBox="0 0 16 16"><path d="M6 4l4 4-4 4" fill="none" stroke="#3c5890" stroke-width="2"/></svg></button>
        </div>
      </div>
    </aside>

    <section class="view">
      <div class="view-main">
        <div class="viewport">
          <svg class="scene" viewBox="171 109 1070 848" preserveAspectRatio="xMidYMid meet">
            <defs>
              <linearGradient id="cone" gradientUnits="userSpaceOnUse" x1="252" y1="440" x2="417" y2="398">
                <stop offset="0" stop-color="#bcbabf"/><stop offset=".22" stop-color="#dad8dc"/><stop offset=".4" stop-color="#cac9ce"/><stop offset=".58" stop-color="#d2d1e4"/><stop offset=".68" stop-color="#fff"/><stop offset=".82" stop-color="#fff"/><stop offset=".9" stop-color="#d4d0f0"/><stop offset="1" stop-color="#dedbe6"/>
              </linearGradient>
              <linearGradient id="wall"><stop offset="0" stop-color="#cfcdea"/><stop offset=".45" stop-color="#aaa8b0"/><stop offset="1" stop-color="#a09fa4"/></linearGradient>
              <clipPath id="hole"><ellipse cx="605.500" cy="419" rx="52" ry="64" transform="rotate(22 605.500 419)"/></clipPath>
              <mask id="open-top" maskUnits="userSpaceOnUse" x="240" y="330" width="190" height="180"><path d="M240 330h190v180H240z" fill="#fff"/><ellipse cx="331" cy="406" rx="51" ry="63" transform="rotate(22 331 406)" fill="#000"/></mask>
              <filter id="soft" x="-50%" y="-80%" width="200%" height="260%"><feGaussianBlur stdDeviation="20 18"/></filter>
              <filter id="soft2" x="-40%" y="-60%" width="180%" height="220%"><feGaussianBlur stdDeviation="15"/></filter>
              <path id="arrow" d="M427 454h75l-9-15h5q7 11 17 17-10 7-17 17h-5l9-14h-75z"/>
              <path id="frustum" d="M286 377L258 421C253 430 252 437 252 443 254 474 298 495 335 495 380 495 415 470 417 443 417 434 415 428 411 421L378 367"/>
            </defs>
            <ellipse cx="332" cy="537" rx="84" ry="53" fill="#25323b" filter="url(#soft)"/>
            <ellipse cx="606" cy="534" rx="71" ry="40" fill="none" stroke="#3a5a70" stroke-width="42" opacity=".84" filter="url(#soft2)"/>
            <path d="M798 598C845 502 1000 486 1095 530c64 26 94 62 96 100-42-38-112-60-202-65-80-6-136-2-191 33z" fill="#26333c" filter="url(#soft2)"/>
            <g stroke="#000" stroke-width="1">
              <use href="#frustum" fill="url(#cone)"/>
              <ellipse cx="331" cy="406" rx="52" ry="64" transform="rotate(22 331 406)" fill="#fff"/>
            </g>
            <g clip-path="url(#hole)"><path d="M540 340h130v76h-12Q605 388 553 416l-13 4z" fill="url(#wall)" stroke="#000"/></g>
            <g transform="translate(274.500 13)" stroke="#000">
              <g mask="url(#open-top)"><use href="#frustum" fill="url(#cone)"/></g>
              <ellipse cx="331" cy="406" rx="51" ry="63" transform="rotate(22 331 406)" fill="none" stroke="#e8e8ee"/>
              <ellipse cx="331" cy="406" rx="52" ry="64" transform="rotate(22 331 406)" fill="none"/>
              <ellipse cx="331" cy="406" rx="50" ry="62" transform="rotate(22 331 406)" fill="none"/>
              <path d="M316 469l-2 24" fill="none" stroke-width="1.500"/>
            </g>
            <path d="M801 483C830 440 900 405 987 405 1080 407 1172 450 1182 520L1155 522C1150 495 1105 484 1055 480 990 477 950 465 895 465 860 467 838 476 826 490z" fill="#cccad0" stroke="#000"/>
            <path d="M801 484l25 7C838 477 860 468 895 466M895 465C950 466 990 478 1055 481 1105 485 1149 496 1155 523l27-3" fill="none" stroke="#000"/>
            <use href="#arrow"/><use href="#arrow" x="276" y="10"/>
            <g class="caption"><text x="277" y="607">圖一</text><text x="563" y="619">圖二</text><text x="908" y="609">圖三</text></g>
          </svg>
          <svg class="triad" viewBox="0 0 46 62">
            <path d="M37 36V16" stroke="#14702c" stroke-width="4"/><path d="M32 18l5-9 5 9z" fill="#187830"/>
            <path d="M36 34L16 31" stroke="#2020b0" stroke-width="3"/><path d="M18 26l-10 4 9 6z" fill="#1818a0"/>
            <path d="M37 35l-5 12" stroke="#a81428" stroke-width="4"/><circle cx="32" cy="48" r="4" fill="#d81828"/>
            <text x="33" y="9" fill="#20a040">Y</text><text x="1" y="33" fill="#2828d0">Z</text><text x="24" y="61" fill="#e81828">X</text>
          </svg>
          <select class="config" aria-label="檢視方向"><option>自訂</option></select>
        </div>
        <div class="vscroll">
          <span class="splitter"></span>
          <button aria-label="向上捲動"><svg viewBox="0 0 16 16"><path d="M4 10l4-4 4 4" fill="none" stroke="#c4c1b4" stroke-width="2"/></svg></button>
          <span class="fill"></span>
          <button aria-label="向下捲動"><svg viewBox="0 0 16 16"><path d="M4 6l4 4 4-4" fill="none" stroke="#c4c1b4" stroke-width="2"/></svg></button>
        </div>
      </div>
      <div class="view-foot">
        <div class="sheets">
          <button class="step" aria-label="上一頁"><svg viewBox="0 0 16 16"><path d="M10 4L6 8l4 4z" fill="#a8a498"/></svg></button>
          <button class="step" aria-label="下一頁"><svg viewBox="0 0 16 16"><path d="M6 4l4 4-4 4z" fill="#a8a498"/></svg></button>
          <svg class="slant" viewBox="0 0 8 16"><path d="M0 1h1l7 14V1z" fill="#fff"/><path d="M1 1l7 14" stroke="#000" stroke-width="1.300"/></svg>
          <button class="sheet active">模型</button>
          <svg class="slant" viewBox="0 0 8 16"><path d="M0 0h8L1 16H0z" fill="#fff"/><path d="M7 1L0 15M3 10l3 6" stroke="#000" fill="none"/></svg>
          <button class="sheet">動畫1</button>
          <svg class="slant last" viewBox="0 0 8 16"><path d="M7 1L0 15" stroke="#000" stroke-width="1.300"/></svg>
        </div>
        <div class="foot-scroll">
          <button aria-label="向左捲動"><svg viewBox="0 0 16 16"><path d="M10 4L6 8l4 4" fill="none" stroke="#c4c1b4" stroke-width="2"/></svg></button>
          <span class="fill"></span>
          <button aria-label="向右捲動"><svg viewBox="0 0 16 16"><path d="M6 4l4 4-4 4" fill="none" stroke="#c4c1b4" stroke-width="2"/></svg></button>
        </div>
      </div>
    </section>

    <aside class="task-pane">
      <button aria-label="SolidWorks 資源"><svg class="ic"><use href="#home"/></svg></button>
      <button aria-label="Design Library"><svg class="ic"><use href="#books"/></svg></button>
      <button aria-label="檔案總管"><svg class="ic"><use href="#find"/></svg></button>
      <button class="current" aria-label="PhotoWorks"><svg class="ic"><use href="#pic"/></svg></button>
      <button class="round" aria-label="展開工作窗格"><svg viewBox="0 0 16 16"><path d="M8 4L4 8l4 4M12 4L8 8l4 4" fill="none" stroke="#244a9c" stroke-width="1.500"/></svg></button>
      <span class="rail"></span>
      <button class="round" aria-label="展開工作窗格"><svg viewBox="0 0 16 16"><path d="M8 4L4 8l4 4M12 4L8 8l4 4" fill="none" stroke="#244a9c" stroke-width="1.500"/></svg></button>
    </aside>
  </main>

  <footer class="status-bar">
    <div class="ime">
      <i class="dots"></i><button class="teal">譱</button><button>譱</button>
      <button aria-label="全形半形"><svg class="ic" viewBox="0 0 16 16"><path d="M2 2h12v12H2z" fill="#fff"/><path d="M3 3h5v10H3z" fill="#777"/></svg></button>
      <button aria-label="輸入法選單"><svg class="ic" viewBox="0 0 16 16"><path d="M1 2h9v11H1z" fill="#fff"/><path d="M2 4.500h8M2 6.500h8M2 8.500h8M2 10.500h8" stroke="#114"/><path d="M9 6v8l2-2 2 4 1-1-1-3h3z" fill="#fff" stroke="#112"/></svg></button>
      <button aria-label="輸入法說明"><svg class="ic" viewBox="0 0 16 16"><path d="M2 1h12v12l-3 2v-2H2z" fill="#fffcc0" stroke="#111"/><path d="M5.500 5q2-3 5 0 0 2-2.500 3v1" stroke="#111" stroke-width="1.500" fill="none"/><path d="M7 10h2v2H7z"/></svg></button>
      <button aria-label="更多"><svg class="ic" viewBox="0 0 16 16"><path d="M5 3h6" stroke="#fff" stroke-width="2"/><path d="M5 11h6l-3 3z" fill="#fff"/></svg></button>
    </div>
    <span class="cell"></span><span class="cell"></span><span class="cell state">正在編輯：組合件</span><span class="cell"></span><span class="cell"></span>
    <button class="quick-help">?</button>
  </footer>
</div>

<div class="taskbar">
  <button class="start"><svg viewBox="0 0 20 18"><use href="#win"/></svg>開始</button>
  <div class="quick">
    <button aria-label="eDrawings"><svg class="ic"><use href="#eicon"/></svg></button>
    <button aria-label="瀏覽器"><svg class="ic"><use href="#flag"/></svg></button>
    <button aria-label="SolidWorks"><svg class="ic"><use href="#sw"/></svg></button>
    <button class="more" aria-label="更多">»</button>
  </div>
  <button class="task"><svg class="ic"><use href="#ie"/></svg>三维网技术论坛 三...</button>
  <button class="task pressed"><svg class="ic"><use href="#sw"/></svg>SolidWorks Office 20...</button>
  <div class="tray">
    <button class="chev" aria-label="顯示隱藏圖示"><svg viewBox="0 0 16 16"><path d="M9 4L5 8l4 4" fill="none" stroke="#fff" stroke-width="2"/></svg></button>
    <svg class="ic"><use href="#tray"/></svg><time>下午 05:19</time>
  </div>
</div>
</body>
</html>
```
FILE: styles.css
```css
* { box-sizing: border-box; }
body {
  margin: 0;
  min-height: 100vh;
  display: flex;
  flex-direction: column;
  background: #ece9d8;
  color: #000;
  font: 12px/16px "Liberation Serif", "Noto Sans CJK TC", serif;
}
button { margin: 0; padding: 0; border: 0; background: none; color: inherit; font: inherit; }
svg { display: block; flex: none; }
.sprite { position: absolute; width: 0; height: 0; }
.ic { width: 16px; height: 16px; overflow: visible; }

.app { flex: 1; display: flex; flex-direction: column; margin-left: 4px; }

/* Title bar */
.title-bar {
  height: 26px;
  display: flex;
  align-items: center;
  gap: 4px;
  padding-left: 1px;
  background: linear-gradient(#3a93ff 0, #0a5ce8 4px, #0054e3 10px, #0058ee 16px, #0066ff 23px, #0048c8 26px);
  color: #fff;
}
.title-bar h1 { margin: 0; font-size: 13px; line-height: 16px; font-weight: bold; text-shadow: 1px 1px #0a2a80; white-space: nowrap; }
.win-buttons { display: flex; gap: 2px; margin-left: auto; }
.wb { width: 21px; height: 21px; border: 1px solid #fff; border-radius: 3px; background: linear-gradient(135deg, #7ea4f4, #2a5ce0 50%, #1a48c4); }
.wb.close { background: linear-gradient(135deg, #f0a088, #dc4c28 50%, #c03810); }
.wb svg { width: 19px; height: 19px; }

/* Menu bar */
.menu-bar { height: 21px; display: flex; align-items: center; gap: 11px; padding-left: 3px; border-bottom: 1px solid #fff; box-shadow: 0 1px #aca899; }
.menu-bar > .ic { margin-right: -5px; }
.menu-bar > button { white-space: nowrap; }
.doc-buttons { display: flex; gap: 2px; margin-left: auto; }
.doc-buttons button { width: 17px; height: 17px; background: #f6f5ee; }
.doc-buttons svg { width: 16px; height: 16px; }

/* Toolbars */
.tool-row { height: 29px; display: flex; border-bottom: 1px solid #b5b1a0; box-shadow: 0 1px #fff; margin-top: 1px; }
.tool-row.second { height: 30px; border-bottom: 0; box-shadow: none; }
.group { display: flex; align-items: center; padding: 0 1px 0 4px; border-right: 1px solid #aca899; box-shadow: inset 1px 0 #fff; }
.group::before { content: ""; width: 5px; height: 23px; margin-right: 4px; border: solid #c0bcab; border-width: 0 1px; background: #fff; }
.group:first-child { padding-left: 3px; }
.group.right { margin-left: auto; margin-right: 21px; border-left: 1px solid #aca899; }
.group button { width: 23px; height: 22px; display: flex; align-items: center; justify-content: center; }
.group .on { background: #fff; border: 1px solid #98aac0; border-radius: 3px; }
.group button.drop { width: 13px; }
.drop::before { content: ""; border: solid transparent; border-width: 3px 3px 0; border-top-color: #000; }
.drop.off::before { border-top-color: #c0bcab; }
.sep { width: 2px; height: 20px; margin: 0 3px; border-left: 1px solid #c8c4b0; }
.group .split { display: flex; height: 23px; align-items: center; }
.group .split .drop { width: 11px; }
.split.on .drop { border-left: 1px solid #b0b8c8; }
.split.tint { background: #dee0e2; border-radius: 3px; }

/* Work area */
.workspace { flex: 1; display: flex; min-height: 0; }
.feature-panel { width: 162px; flex: none; display: flex; flex-direction: column; margin-top: 6px; border-top: 1px solid #000; border-left: 2px solid #8c887a; border-right: 1px solid #fff; }
.panel-tabs { height: 27px; display: flex; align-items: flex-end; }
.panel-tabs button { width: 27px; height: 24px; margin-right: 1px; display: flex; align-items: center; justify-content: center; border: 1px solid #b8b8b4; border-bottom: 0; border-radius: 3px 3px 0 0; background: #f2f1ea; }
.panel-tabs .current { width: 30px; height: 26px; padding-bottom: 4px; background: #fff; border-top: 2px solid #f0a030; }
.panel-tabs .round { margin: 0 5px 5px auto; }
.panel-tabs .round, .task-pane .round { width: 16px; height: 16px; border: 1px solid #8ca0cc; border-radius: 50%; background: #f4f8ff; }
.round svg { width: 14px; height: 14px; }
.tree-area { flex: 1; display: flex; flex-direction: column; justify-content: space-between; margin: 0 4px 2px 1px; border-left: 1px solid #777; border-right: 1px solid #fff; border-top: 1px solid #888; background: linear-gradient(#5ab8ff, #7ec8fb 26%, #9fd0f2 50%, #c4dcec 76%, #e6e8ea); }
.tree { margin: 0; padding: 0; list-style: none; border-bottom: 2px solid #b8cc20; box-shadow: 0 1px #203050; overflow: hidden; }
.tree li { height: 18px; display: flex; align-items: center; padding: 0 0 2px 7px; white-space: nowrap; }
.tree .ic { margin: 3px 5px 0 7px; }
.tree li.root { padding-left: 0; }
.tree .root .ic { margin: 2px 4px 0 3px; }
.tree li.sub { padding-left: 26px; }
.exp { width: 8px; height: 9px; flex: none; margin-top: 5px; border: 1px solid #889; border-radius: 1px; background: linear-gradient(#000, #000) center / 5px 1px no-repeat, #f4f4f0; }
.exp.plus { background: linear-gradient(#000, #000) center / 4px 1px no-repeat, linear-gradient(#000, #000) center / 1px 5px no-repeat, #f4f4f0; }
.exp.none { visibility: hidden; }
.hscroll { height: 16px; display: flex; background: #f6f5f0; }
.hscroll button { width: 16px; height: 16px; border: 1px solid #a8bce8; border-radius: 2px; background: #cddafc; }
.hscroll svg { width: 14px; height: 14px; }
.track { flex: 1; display: flex; padding: 0 2px; }
.thumb { width: 76%; border: 1px solid #90a8e0; border-radius: 2px; background: repeating-linear-gradient(90deg, #98aee0 0 1px, transparent 1px 2px) center / 8px 6px no-repeat, #c8d8fc; }

.view { flex: 1; min-width: 0; display: flex; flex-direction: column; margin-left: 4px; border-left: 1px solid #000; border-top: 1px solid #000; }
.view-main { flex: 1; display: flex; min-height: 0; }
.viewport { flex: 1; position: relative; min-width: 0; background: linear-gradient(#58b8ff, #7cc6fb 26%, #9fd0f2 54%, #c4dcec 76%, #e6e8e9); }
.scene { width: 100%; height: 100%; position: absolute; inset: 0; }
.caption { font: 300 46px "Noto Sans CJK TC", sans-serif; }
.triad { position: absolute; left: 2px; bottom: 29px; width: 46px; height: 62px; font-size: 11px; }
.config { position: absolute; left: 0; bottom: 0; width: 101px; height: 19px; padding: 0 0 0 20px; border: 1px solid #000; border-radius: 0; appearance: none; background: linear-gradient(#000, #000) 87px 0 / 1px 100% no-repeat, #ece9c4; color: #000; font: inherit; }
.viewport::after { content: ""; position: absolute; left: 91px; bottom: 8px; border: solid transparent; border-width: 3px 3px 0; border-top-color: #000; }
.vscroll { width: 17px; display: flex; flex-direction: column; align-items: center; background: #fdfdfa; border-right: 1px solid #d8d4c4; }
.splitter { width: 100%; height: 7px; border: solid #000; border-width: 0 1px 1px 0; background: #ece9d8; }
.vscroll button, .foot-scroll button { width: 16px; height: 16px; border: 1px solid #e4e1d4; background: #f2f0e8; }
.vscroll svg, .foot-scroll svg { width: 14px; height: 14px; }
.fill { flex: 1; }
.view-foot { height: 16px; display: flex; }
.sheets { flex: 1; display: flex; }
.step { width: 16px; border: 1px solid #aca899; border-top-color: #fff; border-left-color: #fff; }
.step svg { width: 14px; height: 14px; }
.slant { width: 8px; height: 16px; margin-left: 2px; }
.sheet { padding: 0 3px; border-bottom: 1px solid #555; }
.sheet.active { padding: 0 4px; background: #fff; font-weight: bold; }
.sheet.active + .slant { margin-left: 0; }
.slant.last { margin-left: 10px; }
.foot-scroll { width: 50%; display: flex; margin-right: 16px; border: solid #000; border-width: 0 2px 0 1px; background: #fbfaf6; }

.task-pane { width: 21px; flex: none; display: flex; flex-direction: column; align-items: center; margin: 0 0 0 1px; padding-top: 27px; border-left: 1px solid #c8c4b4; }
.task-pane button { width: 20px; height: 27px; display: flex; align-items: center; justify-content: center; border: 1px solid #c4c2b8; background: #eceade; }
.task-pane button.current { background: #fff; }
.task-pane .round { margin: 3px 0; flex: none; }
.rail { flex: 1; width: 7px; margin: 5px 0; border: solid #c0bcab; border-width: 0 1px; background: #f8f7f0; }
.task-pane .rail + .round { margin-bottom: 73px; }

/* Status bar */
.status-bar { position: relative; height: 21px; display: flex; align-items: center; justify-content: flex-end; padding-right: 44px; border-top: 1px solid #96927f; box-shadow: inset 0 1px #d8d4c4; }
.cell { height: 14px; min-width: 8px; border-left: 1px solid #c0bcab; box-shadow: inset 1px 0 #fff; }
.state { line-height: 14px; padding: 0 6px 0 3px; }
.quick-help { width: 14px; height: 14px; margin-left: 11px; background: #fffcb0; border: solid #6a7a9a; border-width: 0 1px 1px 0; color: #087010; font: bold 13px/13px "Liberation Sans", sans-serif; }
.ime { position: absolute; left: 57%; bottom: 1px; width: 133px; height: 24px; display: flex; align-items: center; gap: 3px; padding: 0 4px; background: #2456d4; color: #fff; }
.ime button { width: 17px; height: 17px; font-size: 15px; line-height: 16px; display: flex; justify-content: center; }
.ime .teal { background: #188078; }
.dots { width: 2px; height: 15px; border-left: 2px dotted #103090; }

/* Taskbar */
.taskbar { height: 30px; display: flex; align-items: center; background: linear-gradient(#4a90f8 0, #2a66e4 3px, #245adc 8px, #2258d8 24px, #1a44b0 30px); color: #fff; font-size: 12px; }
.start { align-self: stretch; width: 94px; display: flex; align-items: center; gap: 5px; padding-left: 13px; border-radius: 0 10px 10px 0; background: linear-gradient(#6cb868 0, #3c9a3c 5px, #38923a 20px, #2a7a2c 30px); box-shadow: inset -3px 0 4px #24641f; font-size: 17px; line-height: 20px; font-style: italic; text-shadow: 1px 1px #1c4c1c; }
.start svg { width: 20px; height: 18px; }
.quick { width: 103px; display: flex; gap: 8px; padding-left: 11px; }
.quick .more { margin: -12px 0 0 4px; font-size: 15px; }
.task { width: 157px; height: 25px; margin-right: 4px; padding: 0 8px; display: flex; align-items: center; gap: 4px; border-radius: 3px; background: #3c80f4; box-shadow: inset 1px 1px #68a0fc; white-space: nowrap; }
.task.pressed { background: #1c48b4; box-shadow: inset 1px 1px #143880; }
.tray { align-self: stretch; width: 98px; margin-left: auto; display: flex; align-items: center; gap: 4px; background: linear-gradient(#38b0f8 0, #1490ec 4px, #1290e8 24px, #0c70c8 30px); border-left: 1px solid #0c3c90; }
.chev { width: 17px; height: 17px; margin-left: -9px; border-radius: 50%; background: radial-gradient(circle at 40% 30%, #80c8ff, #1c6cd8 70%); }
.chev svg { width: 17px; height: 17px; }
.tray time { margin-left: 2px; white-space: nowrap; }
```
